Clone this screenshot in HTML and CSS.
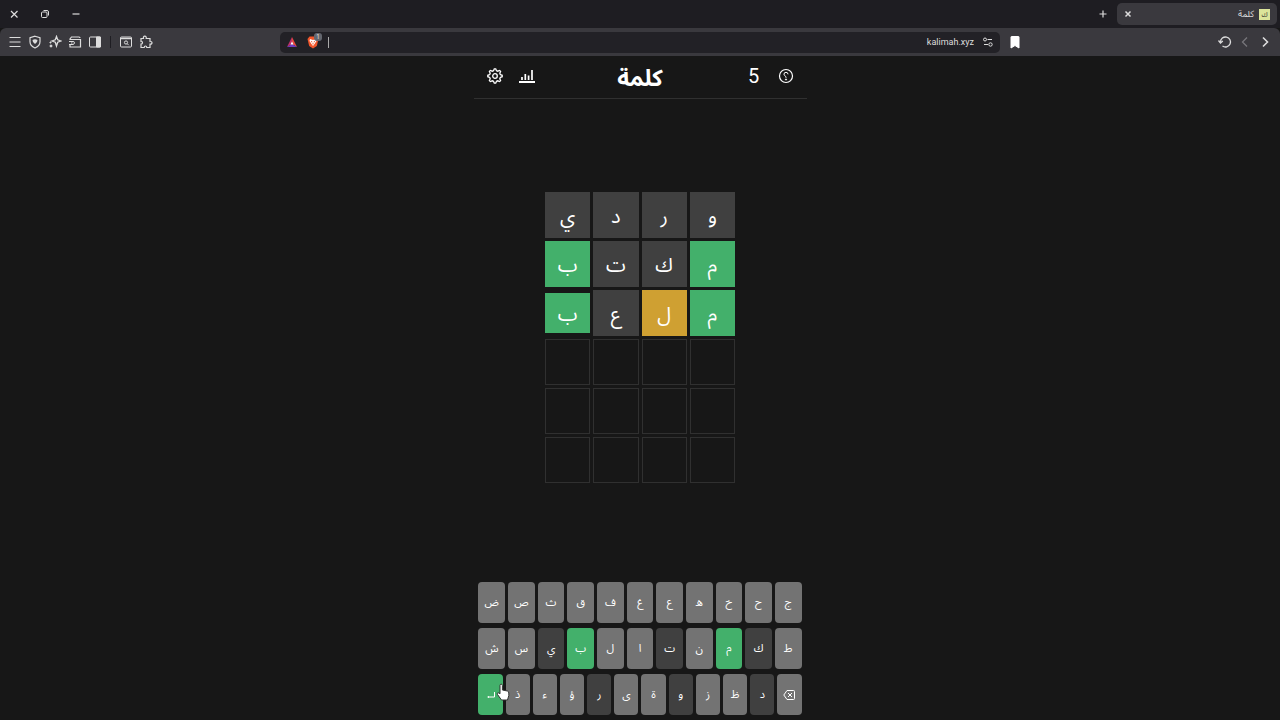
FILE: index.html
```html
<!DOCTYPE html>
<html lang="ar" dir="rtl">
  <head>
    <meta charset="UTF-8" />
    <meta name="viewport" content="width=device-width, initial-scale=1.0" />
    <title>كلمة</title>
    <link rel="stylesheet" href="styles.css">
  </head>
  <body>
    <div class="tabbar">
      <div class="tab">
        <span class="favicon">ك</span>
        <span class="tab-title">كلمة</span>
        <button class="tab-close" aria-label="إغلاق التبويب">
          <svg width="8" height="8" viewBox="0 0 8 8"><path d="M1.500 1.500l5 5M6.500 1.500l-5 5" stroke-width="1.500" /></svg>
        </button>
      </div>
      <button class="new-tab" aria-label="تبويب جديد">
        <svg width="10" height="10" viewBox="0 0 10 10"><path d="M5 1.500v7M1.500 5h7" stroke-width="1.200" /></svg>
      </button>
      <div class="window-buttons">
        <button aria-label="تصغير"><svg width="10" height="10" viewBox="0 0 10 10"><path d="M1.500 5h7" stroke-width="1.200" /></svg></button>
        <button aria-label="استعادة"><svg width="10" height="10" viewBox="0 0 10 10"><rect x="1.500" y="3" width="5.500" height="5.500" rx="1" /><path d="M3.500 1.500h3.500q1.500 0 1.500 1.500v3.500" /></svg></button>
        <button aria-label="إغلاق"><svg width="10" height="10" viewBox="0 0 10 10"><path d="M2 2l6.500 6.500M8.500 2L2 8.500" stroke-width="1.200" /></svg></button>
      </div>
    </div>

    <div class="toolbar">
      <div class="nav-buttons">
        <button aria-label="رجوع"><svg width="14" height="14" viewBox="0 0 14 14"><path d="M5 2.500L9.500 7 5 11.500" stroke-width="1.600" /></svg></button>
        <button class="dim" aria-label="تقدم"><svg width="14" height="14" viewBox="0 0 14 14"><path d="M9 2.500L4.500 7 9 11.500" stroke-width="1.300" /></svg></button>
        <button aria-label="تحديث"><svg width="14" height="14" viewBox="0 0 14 14"><path d="M2.500 7a5 5 0 1 1 2 4" stroke-width="1.300" /><path d="M0.500 5.500l2 2.500 2.300-2" stroke-width="1.300" /></svg></button>
      </div>
      <div class="address-area">
        <button aria-label="إشارة مرجعية"><svg width="14" height="14" viewBox="0 0 14 14"><path class="fill" d="M3.500 1.500h7q.5 0 .5.500v11L7 10.500 3 13V2q0-.5.500-.5z" /></svg></button>
        <div class="address">
          <svg width="12" height="12" viewBox="0 0 12 12"><circle cx="3" cy="3.500" r="1.500" /><path d="M5.500 3.500h4.500M2 8.500h4" /><circle cx="8.500" cy="8.500" r="1.700" /></svg>
          <input class="url" type="text" value="kalimah.xyz" dir="ltr" aria-label="العنوان" />
          <span class="divider"></span>
          <span class="shield">
            <svg width="14" height="14" viewBox="0 0 14 14"><path d="M3.500 1.500h7L12.500 4l-1.700 7L7 13.500 3.200 11 1.500 4z" fill="#f1562b" stroke="none" /><path d="M4 4l3 1 3-1 .5 2-2 3L7 11 5.500 9l-2-3z" fill="#fff" stroke="none" /><path d="M5 6.500l1.300.5M9 6.500L7.700 7M7 8v1.500" stroke="#f1562b" /></svg>
            <span class="count">1</span>
          </span>
          <svg width="12" height="12" viewBox="0 0 12 12"><path d="M6 1L1 11l5-3z" fill="#c0306a" stroke="none" /><path d="M6 1l5 10-5-3z" fill="#e8473d" stroke="none" /><path d="M1 11h10L6 8z" fill="#6f3dc0" stroke="none" /><path d="M6 5.500L4.500 8.500h3z" fill="#fff" stroke="none" /></svg>
        </div>
      </div>
      <div class="tools">
        <button aria-label="الإضافات"><svg width="14" height="14" viewBox="0 0 14 14"><path d="M2 3.500h2.500q-.5-2.300 1.300-2.300T7.200 3.500H11v3q2-.2 2 1.300t-2 1.300v3.400H7.800q0-1.500-1.300-1.500t-1.300 1.500H2V9q1.500 0 1.500-1.300T2 6.500z" stroke-width="1.200" /></svg></button>
        <button aria-label="بحث"><svg width="14" height="14" viewBox="0 0 14 14"><rect x="1.500" y="2" width="11" height="10" rx="1" /><path d="M1.500 3.500h11" stroke-width="1.500" /><circle cx="7" cy="7.500" r="1.600" /><path d="M8.200 8.700l1.500 1.500" /></svg></button>
        <span class="separator"></span>
        <button aria-label="الشريط الجانبي"><svg width="14" height="14" viewBox="0 0 14 14"><rect x="1.500" y="2" width="11" height="10" rx="1" /><path class="fill" d="M8.500 2h4v10h-4z" /></svg></button>
        <button aria-label="المحفظة"><svg width="14" height="14" viewBox="0 0 14 14"><path d="M2 5V4l1.500-2H11q1 0 1 1M2 4.500h10.500V12H2v-2" stroke-width="1.200" /><path d="M1 6.500h4q1.500 0 1.500 1.300T5 9.500H1M3 8h1.500" /></svg></button>
        <button aria-label="المساعد"><svg width="14" height="14" viewBox="0 0 14 14"><path d="M8.500 1.500l1.200 3.300 3.300 1.200-3.300 1.200-1.200 3.800-1.200-3.800L4 6l3.300-1.200z" stroke-width="1.300" /><circle class="fill" cx="3" cy="11" r="1" /><circle class="fill" cx="2.500" cy="7.500" r=".6" /></svg></button>
        <button aria-label="الخصوصية"><svg width="14" height="14" viewBox="0 0 14 14"><path d="M7 1.200l5 1.500v4q0 4-5 6.300-5-2.300-5-6.300v-4z" stroke-width="1.200" /><path class="fill" d="M4.500 5q2.500-1.300 5 0L9 7 7 9 5 7z" stroke="none" /></svg></button>
        <button aria-label="القائمة"><svg width="14" height="14" viewBox="0 0 14 14"><path d="M1.500 2.500h11M1.500 7h11M1.500 11.500h11" /></svg></button>
      </div>
    </div>

    <main class="game">
      <header class="header">
        <div class="header-side">
          <button aria-label="مساعدة"><svg width="16" height="16" viewBox="0 0 16 16"><circle cx="8" cy="8" r="6.500" stroke-width="1.200" /><path d="M10 6.300Q10 4.300 8 4.300T6 6.200Q6 7.300 7.200 8T8 9.800" /><circle class="fill" cx="8" cy="11.500" r=".6" /></svg></button>
          <button class="length">5</button>
        </div>
        <h1>كلمة</h1>
        <div class="header-side">
          <button aria-label="الإحصائيات"><svg width="16" height="16" viewBox="0 0 16 16"><path d="M0 14h16" stroke-width="2" /><path d="M3 12V9M6.300 12V6M9.600 12V7.500M13 12V2" stroke-width="1.700" /></svg></button>
          <button aria-label="الإعدادات"><svg width="16" height="16" viewBox="0 0 16 16"><path d="M6.500 2.700L7.300 0.800h1.400l.8 1.900 1.200.5 1.900-.8 1 1-.8 1.900.5 1.200 1.900.8v1.400l-1.900.8-.5 1.200.8 1.900-1 1-1.900-.8-1.200.5-.8 1.900H7.300l-.8-1.900-1.200-.5-1.900.8-1-1 .8-1.900-.5-1.200-1.900-.8V7.300l1.900-.8.5-1.200-.8-1.900 1-1 1.900.8z" stroke-width="1.300" /><circle cx="8" cy="8" r="2.300" stroke-width="1.300" /></svg></button>
        </div>
      </header>

      <div class="board-area">
        <div class="board">
          <div class="tile absent">و</div>
          <div class="tile absent">ر</div>
          <div class="tile absent">د</div>
          <div class="tile absent">ي</div>
          <div class="tile correct">م</div>
          <div class="tile absent">ك</div>
          <div class="tile absent">ت</div>
          <div class="tile correct">ب</div>
          <div class="tile correct">م</div>
          <div class="tile present">ل</div>
          <div class="tile absent">ع</div>
          <div class="tile correct flipping">ب</div>
          <div class="tile"></div>
          <div class="tile"></div>
          <div class="tile"></div>
          <div class="tile"></div>
          <div class="tile"></div>
          <div class="tile"></div>
          <div class="tile"></div>
          <div class="tile"></div>
          <div class="tile"></div>
          <div class="tile"></div>
          <div class="tile"></div>
          <div class="tile"></div>
        </div>
      </div>

      <div class="keyboard">
        <div class="row">
          <button>ج</button>
          <button>ح</button>
          <button>خ</button>
          <button>ه</button>
          <button>ع</button>
          <button>غ</button>
          <button>ف</button>
          <button>ق</button>
          <button>ث</button>
          <button>ص</button>
          <button>ض</button>
        </div>
        <div class="row">
          <button>ط</button>
          <button class="absent">ك</button>
          <button class="correct">م</button>
          <button>ن</button>
          <button class="absent">ت</button>
          <button>ا</button>
          <button>ل</button>
          <button class="correct">ب</button>
          <button class="absent">ي</button>
          <button>س</button>
          <button>ش</button>
        </div>
        <div class="row">
          <button aria-label="حذف"><svg width="12" height="12" viewBox="0 0 12 12"><path d="M4 1.500h6.500q1 0 1 1v7q0 1-1 1H4L.8 6z" /><path d="M5 4l4 4M9 4L5 8" /></svg></button>
          <button class="absent">د</button>
          <button>ظ</button>
          <button>ز</button>
          <button class="absent">و</button>
          <button>ة</button>
          <button>ى</button>
          <button class="absent">ر</button>
          <button>ؤ</button>
          <button>ء</button>
          <button>ذ</button>
          <button class="correct enter" aria-label="إدخال">
            <svg width="12" height="12" viewBox="0 0 12 12"><path d="M9.500 3v5H3" /><path class="fill" d="M4 7v2L2 8z" stroke="none" /></svg>
            <svg class="cursor" width="14" height="18" viewBox="0 0 14 18"><path d="M4 10V2.500q0-1.300 1.200-1.300T6.400 2.500V7l5 1q1.400.4 1.400 2v2.500L11.500 17h-6L1.500 11.500q-.8-1.300.5-1.700 1-.2 2 1z" /></svg>
          </button>
        </div>
      </div>
    </main>
  </body>
</html>
```
FILE: styles.css
```css
* {
  box-sizing: border-box;
}
body {
  margin: 0;
  min-height: 100vh;
  display: flex;
  flex-direction: column;
  background-color: #171717;
  color: #fff;
  font-family: "Noto Sans Arabic", "Noto Sans", "DejaVu Sans", sans-serif;
}
button {
  display: flex;
  align-items: center;
  justify-content: center;
  padding: 0;
  border: 0;
  background: none;
  color: inherit;
  font-family: inherit;
  cursor: pointer;
}
svg {
  display: block;
  flex: none;
  fill: none;
  stroke: currentColor;
}
.fill {
  fill: currentColor;
}
.tabbar {
  display: flex;
  align-items: center;
  height: 28px;
  padding: 0 3px;
  background-color: #1e1d22;
  color: #ddd;
}
.tab {
  display: flex;
  align-items: center;
  gap: 5px;
  width: 160px;
  height: 22px;
  padding: 0 7px;
  border-radius: 5px;
  background-color: #3a393e;
}
.favicon {
  width: 11px;
  height: 11px;
  background-color: #dce59a;
  color: #333;
  font-size: 7px;
  line-height: 11px;
  text-align: center;
}
.tab-title {
  font-size: 9px;
}
.tab-close {
  margin-right: auto;
}
.new-tab {
  margin-right: 9px;
}
.window-buttons {
  display: flex;
  gap: 21px;
  margin-right: auto;
  padding-left: 6px;
}
.toolbar {
  display: flex;
  align-items: center;
  justify-content: space-between;
  height: 28px;
  padding: 0 8px;
  border-radius: 6px 6px 0 0;
  background-color: #3a393e;
  color: #ddd;
}
.nav-buttons {
  display: flex;
  gap: 6px;
  width: 128px;
}
.dim {
  color: #77767b;
}
.address-area {
  display: flex;
  align-items: center;
  gap: 8px;
  width: calc(50% + 110px);
}
.address-area > button {
  color: #fff;
}
.address {
  flex: 1;
  display: flex;
  align-items: center;
  gap: 8px;
  height: 21px;
  padding: 0 6px;
  border-radius: 5px;
  background-color: #222126;
}
.url {
  flex: 1;
  min-width: 0;
  padding: 0;
  border: 0;
  outline: 0;
  background: none;
  color: inherit;
  font-family: Roboto, sans-serif;
  font-size: 9px;
  text-align: right;
}
.divider {
  width: 1px;
  height: 11px;
  background-color: #aaa;
}
.shield {
  position: relative;
}
.count {
  position: absolute;
  top: -2px;
  right: -2px;
  width: 8px;
  height: 8px;
  border-radius: 3px;
  background-color: #63666e;
  font-size: 7px;
  line-height: 8px;
  text-align: center;
}
.tools {
  display: flex;
  align-items: center;
  gap: 6px;
  width: 150px;
  justify-content: flex-end;
}
.separator {
  width: 1px;
  height: 12px;
  margin: 0 2px;
  background-color: #1e1d22;
}
.game {
  flex: 1;
  display: flex;
  flex-direction: column;
  width: 100%;
  max-width: 333px;
  margin: 0 auto;
}
.header {
  display: flex;
  align-items: center;
  justify-content: space-between;
  height: 43px;
  padding: 0 13px 2px;
  border-bottom: 1px solid #303030;
}
.header-side {
  display: flex;
  gap: 16px;
  width: 60px;
}
.header-side:last-child {
  justify-content: flex-end;
}
.length {
  width: 16px;
  font-family: Roboto, sans-serif;
  font-size: 20px;
  line-height: 20px;
}
h1 {
  margin: 0;
  padding-top: 6px;
  font-size: 23px;
  line-height: 34px;
}
.board-area {
  flex: 1;
  display: flex;
  align-items: center;
  justify-content: center;
  padding-bottom: 7px;
}
.board {
  display: grid;
  grid-template-columns: repeat(4, 1fr);
  grid-auto-rows: 46px;
  gap: 3px;
  width: 190px;
}
.tile {
  display: flex;
  align-items: center;
  justify-content: center;
  padding-top: 4px;
  border: 1px solid #303030;
  font-size: 20px;
}
.tile.absent {
  border-color: #404040;
}
.tile.correct {
  border-color: #43b06b;
}
.tile.present {
  border-color: #cfa032;
  background-color: #cfa032;
}
.absent {
  background-color: #404040;
}
.correct {
  background-color: #43b06b;
}
.flipping {
  margin: 3px 0;
}
.keyboard {
  display: flex;
  flex-direction: column;
  gap: 5px;
  padding: 0 5px 5px;
}
.row {
  display: flex;
  gap: 3px;
}
.row button {
  flex: 1;
  height: 41px;
  border-radius: 4px;
  font-size: 11px;
}
.row button:not(.absent):not(.correct) {
  background-color: #737373;
}
.enter {
  position: relative;
}
.cursor {
  position: absolute;
  top: 9px;
  right: -7px;
  z-index: 1;
  fill: #fff;
  stroke: #333;
}
```
